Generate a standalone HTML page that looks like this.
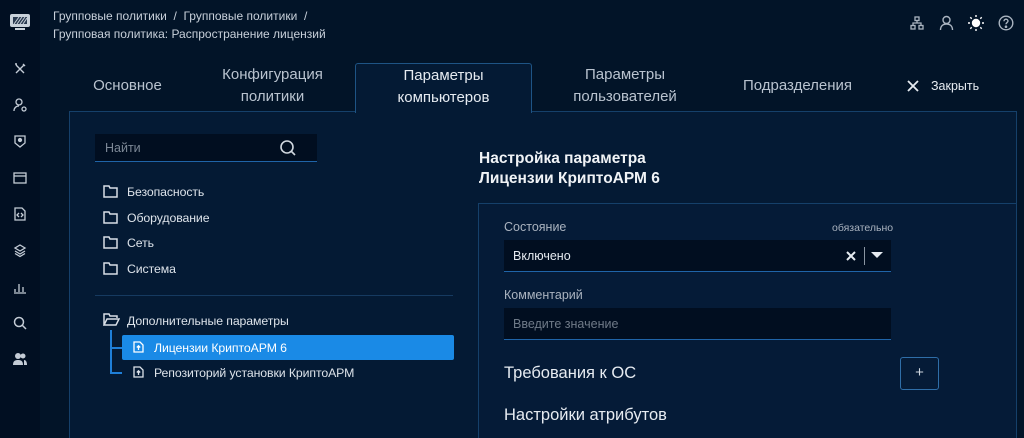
<!DOCTYPE html>
<html style="width:1024px;height:438px;overflow:hidden"><head><meta charset="utf-8"><style>
*{margin:0;padding:0;box-sizing:border-box}
body{width:1024px;height:438px;overflow:hidden;background:#021428;font-family:"Liberation Sans",sans-serif;color:#d6dde6;position:relative}
.abs{position:absolute}
.side{left:0;top:0;width:40px;height:438px;background:#010f22}
.ic{position:absolute;left:12px;width:16px;height:16px}
.t{font-size:15px;color:#b9c3cf;text-align:center;line-height:22px}
.panel{left:69px;top:111px;width:948px;height:327px;background:#041a34;border:1px solid #15406a;border-bottom:none}
.tree{font-size:12.3px;color:#dde3ea;letter-spacing:-0.1px}
.fold{position:absolute;width:15px;height:14px}
</style></head><body>
<div class="abs side"></div>
<svg class="abs" style="left:9px;top:12px" width="22" height="20" viewBox="0 0 22 20"><rect x="1" y="2" width="20" height="13" rx="2" fill="#c9d1da"/><rect x="4" y="5" width="14" height="7" fill="#2a3a50"/><path d="M5 12l5-7M8 12l5-7M11 12l5-7M14 12l4-6" stroke="#c9d1da" stroke-width="1"/><rect x="6" y="16" width="10" height="2" fill="#c9d1da"/></svg>
<svg class="ic" style="top:61px" viewBox="0 0 16 16" stroke="#c4ccd6" stroke-width="1.4" fill="none"><path d="M4 4l8 8M12 4l-8 8M3 3l2 0M11 3l2 2"/></svg>
<svg class="ic" style="top:97px" viewBox="0 0 16 16" stroke="#c4ccd6" stroke-width="1.3" fill="none"><circle cx="7" cy="5" r="3"/><path d="M2 14c0-3 2-5 5-5"/><circle cx="12" cy="12" r="2"/></svg>
<svg class="ic" style="top:133px" viewBox="0 0 16 16" stroke="#c4ccd6" stroke-width="1.3" fill="none"><path d="M3 3h10v7l-5 4-5-4z"/><circle cx="8" cy="7" r="1.5" fill="#c4ccd6"/></svg>
<svg class="ic" style="top:170px" viewBox="0 0 16 16" stroke="#c4ccd6" stroke-width="1.3" fill="none"><rect x="2" y="3" width="12" height="10"/><path d="M2 6h12"/></svg>
<svg class="ic" style="top:206px" viewBox="0 0 16 16" stroke="#c4ccd6" stroke-width="1.3" fill="none"><path d="M3 2h7l3 3v9H3z"/><path d="M7 7l-2 2 2 2M9 7l2 2-2 2"/></svg>
<svg class="ic" style="top:242px" viewBox="0 0 16 16" stroke="#c4ccd6" stroke-width="1.3" fill="none"><path d="M8 3l5 3-5 3-5-3z M3 9l5 3 5-3M3 11.5l5 3 5-3"/></svg>
<svg class="ic" style="top:279px" viewBox="0 0 16 16" stroke="#c4ccd6" stroke-width="1.3" fill="none"><path d="M3 13v-3M7 13V5M11 13V8M2 14h12"/></svg>
<svg class="ic" style="top:315px" viewBox="0 0 16 16" stroke="#c4ccd6" stroke-width="1.5" fill="none"><circle cx="7" cy="7" r="4.5"/><path d="M10.5 10.5L14 14"/></svg>
<svg class="ic" style="top:351px" viewBox="0 0 16 16" fill="#c4ccd6"><circle cx="6" cy="5" r="3"/><path d="M1 14c0-4 2-5 5-5s5 1 5 5z"/><circle cx="11" cy="5" r="2.5"/><path d="M12 9c2 0 3 2 3 5h-3z"/></svg>

<div class="abs" style="left:53px;top:7px;font-size:12px;line-height:18px;color:#c8d0da">Групповые политики &nbsp;/&nbsp; Групповые политики &nbsp;/<br>Групповая политика: Распространение лицензий</div>
<svg class="abs" style="left:910px;top:16px" width="14" height="14" viewBox="0 0 14 14" stroke="#aab4c0" fill="none" stroke-width="1.3"><rect x="5" y="1" width="4" height="3.5"/><rect x="1" y="9.5" width="4" height="3.5"/><rect x="9" y="9.5" width="4" height="3.5"/><path d="M7 4.5v2.5M3 9.5V7h8v2.5"/></svg>
<svg class="abs" style="left:939px;top:15px" width="15" height="16" viewBox="0 0 15 16" stroke="#aab4c0" fill="none" stroke-width="1.4"><circle cx="7.5" cy="5" r="3.5"/><path d="M1.5 15c0-4 2.5-6 6-6s6 2 6 6"/></svg>
<svg class="abs" style="left:968px;top:15px" width="16" height="16" viewBox="0 0 16 16" stroke="#fff" stroke-width="1.4"><circle cx="8" cy="8" r="3.5" fill="#fff"/><path d="M8 0v2M8 14v2M0 8h2M14 8h2M2.3 2.3l1.4 1.4M12.3 12.3l1.4 1.4M2.3 13.7l1.4-1.4M12.3 3.7l1.4-1.4"/></svg>
<svg class="abs" style="left:998px;top:15px" width="16" height="16" viewBox="0 0 16 16" stroke="#aab4c0" fill="none" stroke-width="1.4"><circle cx="8" cy="8" r="6.8"/><path d="M6 6.2c0-1.2 1-2 2-2s2 .8 2 1.8c0 1.5-2 1.6-2 3.2"/><circle cx="8" cy="11.7" r=".6" fill="#aab4c0"/></svg>

<div class="panel abs"></div>
<div class="abs" style="left:355px;top:63px;width:177px;height:50px;background:#041a34;border:1px solid #1e5485;border-bottom:none;border-radius:3px 3px 0 0"></div>
<div class="abs t" style="left:80px;top:75px;width:95px">Основное</div>
<div class="abs t" style="left:200px;top:64px;width:145px">Конфигурация<br>политики</div>
<div class="abs t" style="left:356px;top:65px;width:175px;color:#e6ebf1">Параметры<br>компьютеров</div>
<div class="abs t" style="left:545px;top:64px;width:160px">Параметры<br>пользователей</div>
<div class="abs t" style="left:730px;top:75px;width:135px">Подразделения</div>
<svg class="abs" style="left:907px;top:80px" width="12" height="12" viewBox="0 0 12 12" stroke="#e6ebf1" stroke-width="1.8"><path d="M1 1l10 10M11 1L1 11"/></svg>
<div class="abs" style="left:931px;top:79px;font-size:12.5px;color:#e6ebf1">Закрыть</div>

<div class="abs" style="left:95px;top:134px;width:222px;height:28px;background:#010e20;border-bottom:1px solid #1f64a8"></div>
<div class="abs" style="left:105px;top:141px;font-size:12.5px;color:#7d8896">Найти</div>
<svg class="abs" style="left:279px;top:139px" width="18" height="18" viewBox="0 0 18 18" stroke="#d0d7df" stroke-width="1.6" fill="none"><circle cx="8" cy="8" r="6"/><path d="M12.5 12.5L16 16"/></svg>

<svg class="fold" style="left:103px;top:184px" viewBox="0 0 15 14" stroke="#d8dee6" stroke-width="1.5" fill="none"><path d="M1 2h5l1 2h7v9H1z"/></svg><div class="abs tree" style="left:127px;top:185px">Безопасность</div>
<svg class="fold" style="left:103px;top:210px" viewBox="0 0 15 14" stroke="#d8dee6" stroke-width="1.5" fill="none"><path d="M1 2h5l1 2h7v9H1z"/></svg><div class="abs tree" style="left:127px;top:211px">Оборудование</div>
<svg class="fold" style="left:103px;top:235px" viewBox="0 0 15 14" stroke="#d8dee6" stroke-width="1.5" fill="none"><path d="M1 2h5l1 2h7v9H1z"/></svg><div class="abs tree" style="left:127px;top:236px">Сеть</div>
<svg class="fold" style="left:103px;top:261px" viewBox="0 0 15 14" stroke="#d8dee6" stroke-width="1.5" fill="none"><path d="M1 2h5l1 2h7v9H1z"/></svg><div class="abs tree" style="left:127px;top:262px">Система</div>
<div class="abs" style="left:95px;top:295px;width:358px;height:1px;background:#163a60"></div>
<svg class="abs" style="left:103px;top:313px" width="17" height="14" viewBox="0 0 17 14" stroke="#d8dee6" stroke-width="1.5" fill="none"><path d="M1 12V1h5l1 2h7v2M1 12l3-6h12l-3 6z"/></svg>
<div class="abs tree" style="left:127px;top:314px">Дополнительные параметры</div>
<div class="abs" style="left:110px;top:330px;width:2px;height:44px;background:#1f7fd8"></div>
<div class="abs" style="left:110px;top:347px;width:12px;height:2px;background:#1f7fd8"></div>
<div class="abs" style="left:110px;top:372px;width:12px;height:2px;background:#1f7fd8"></div>
<div class="abs" style="left:122px;top:335px;width:332px;height:25px;background:#1a8ae6;border-radius:2px"></div>
<svg class="abs" style="left:133px;top:341px" width="11" height="12" viewBox="0 0 11 12" stroke="#fff" stroke-width="1.3" fill="none"><path d="M1 1h6l3 3v7H1z M5.5 9V5M3.8 6.5l1.7-1.7 1.7 1.7"/></svg>
<div class="abs tree" style="left:154px;top:341px;color:#fff">Лицензии КриптоАРМ 6</div>
<svg class="abs" style="left:133px;top:366px" width="11" height="12" viewBox="0 0 11 12" stroke="#dde3ea" stroke-width="1.3" fill="none"><path d="M1 1h6l3 3v7H1z M5.5 9V5M3.8 6.5l1.7-1.7 1.7 1.7"/></svg>
<div class="abs tree" style="left:154px;top:366px">Репозиторий установки КриптоАРМ</div>

<div class="abs" style="left:479px;top:149px;font-size:15.5px;font-weight:bold;line-height:20px;color:#f0f3f6">Настройка параметра<br>Лицензии КриптоАРМ 6</div>
<div class="abs" style="left:478px;top:203px;width:539px;height:235px;background:#051b37;border:1px solid #15406a;border-bottom:none"></div>
<div class="abs" style="left:504px;top:220px;font-size:12.5px;color:#aab3bf">Состояние</div>
<div class="abs" style="left:832px;top:222px;font-size:10.5px;color:#aab3bf">обязательно</div>
<div class="abs" style="left:504px;top:240px;width:387px;height:32px;background:#010e20;border-bottom:1px solid #1f64a8"></div>
<div class="abs" style="left:513px;top:249px;font-size:12.5px;color:#e6ebf1">Включено</div>
<svg class="abs" style="left:846px;top:251px" width="10" height="10" viewBox="0 0 10 10" stroke="#e6ebf1" stroke-width="2"><path d="M1 1l8 8M9 1L1 9"/></svg>
<div class="abs" style="left:864px;top:247px;width:1px;height:18px;background:#8a95a2"></div>
<svg class="abs" style="left:871px;top:252px" width="12" height="7" viewBox="0 0 12 7"><path d="M0 0h12L6 6z" fill="#e6ebf1"/></svg>
<div class="abs" style="left:504px;top:288px;font-size:12.5px;color:#aab3bf">Комментарий</div>
<div class="abs" style="left:504px;top:308px;width:387px;height:32px;background:#010e20;border-bottom:1px solid #1f64a8"></div>
<div class="abs" style="left:513px;top:317px;font-size:12.5px;color:#6f7a88">Введите значение</div>
<div class="abs" style="left:504px;top:364px;font-size:16.5px;color:#e6ebf1">Требования к ОС</div>
<div class="abs" style="left:900px;top:357px;width:39px;height:33px;border:1px solid #2f6ea8;border-radius:3px;text-align:center;line-height:30px;font-size:15px;color:#d0d7df">+</div>
<div class="abs" style="left:504px;top:406px;font-size:16.5px;color:#e6ebf1">Настройки атрибутов</div>
</body></html>
